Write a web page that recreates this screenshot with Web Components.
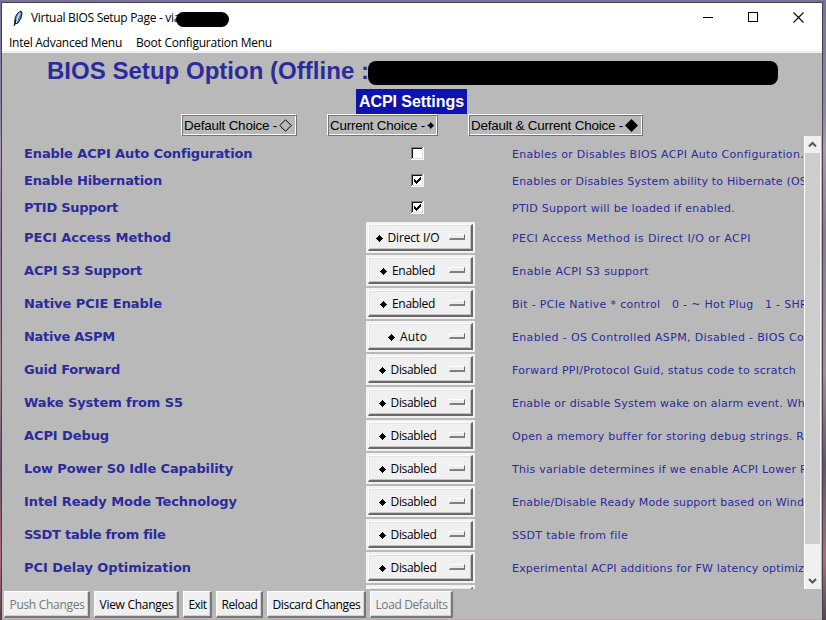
<!DOCTYPE html>
<html lang="en"><head><meta charset="utf-8"><title>Virtual BIOS Setup Page</title>
<style>html,body{margin:0;height:620px;overflow:hidden}</style></head>
<body><bios-window></bios-window>
<script>
const ui='"Open Sans","Noto Sans",sans-serif';
function define(name,html,init){
  customElements.define(name,class extends HTMLElement{
    connectedCallback(){
      if(this.shadowRoot)return;
      this.attachShadow({mode:'open'});
      const t=document.createElement('template');
      t.innerHTML=typeof html==='function'?html(this):html;
      this.shadowRoot.append(t.content.cloneNode(true));
      if(init)init(this);
    }
  });
}
/* Single text line tracked to an exact width in pixels. */
define('fit-text','<style>:host{display:inline-block;white-space:pre;flex:none}</style><span><slot></slot></span>',el=>{
  const w=+el.getAttribute('w');if(!w)return;
  const s=el.shadowRoot.querySelector('span'),n=s.getBoundingClientRect().width;
  s.style.letterSpacing=((w-n)/el.textContent.length)+'px';
  el.style.width=w+'px';
});
define('check-box',el=>`<style>:host{display:block;width:13px;height:13px}svg{display:block}</style>
<svg width="13" height="13" shape-rendering="crispEdges"><path fill="#fff" d="M0 0h13v13H0z"/><path fill="#808080" d="M0 0h12v1H1v11H0z"/><path fill="#111" d="M1 1h10v1H2v9H1z"/><path fill="#ddd" d="M11 2h1v10H2v-1h9z"/>
${el.hasAttribute('on')?'<path fill="#000" d="M3 5h1v1h1v1h1V6h1V5h1V4h1V3h1v3H9v1H8v1H7v1H6v1H5V9H4V8H3z"/>':''}</svg>`);
define('option-menu',el=>`<style>
:host{display:block;width:109px;height:31px;box-sizing:border-box;padding:2px;background:#f2f2f2;font:12px/14px ${ui};color:#000}
.b{height:27px;width:105px;box-sizing:border-box;display:flex;align-items:center;background:#f0f0f0;border:1px solid #fff;border-right:2px solid #696969;border-bottom:2px solid #696969;box-shadow:inset 1px 1px #e3e3e3,inset -1px -1px #c4c4c4;padding:1px 6px 0 0}
.t{flex:1;display:flex;justify-content:center;align-items:center;gap:5px;padding-right:3px}
svg{flex:none;margin-top:1px}i{width:16px;height:6px;margin-top:-2px;box-sizing:border-box;border:1px solid #fff;border-right:1px solid #696969;border-bottom:2px solid #808080;background:#ececec}</style>
<div class="b"><div class="t">${el.getAttribute('value')?`<svg width="7" height="7" shape-rendering="crispEdges"><path d="M3 0h1v1h1v1h1v1h1v1H6v1H5v1H4v1H3V6H2V5H1V4H0V3h1V2h1V1h1z"/></svg><fit-text w="${el.getAttribute('w')}">${el.getAttribute('value')}</fit-text>`:''}</div><i></i></div>`);
define('setting-row',el=>{const v=el.getAttribute('value'),c=v==='on'||v==='off';return `<style>
:host{display:grid;grid-template-columns:342px 146px 292px;align-items:center;height:${c?27:33}px;padding-left:22px;color:#2b2b9c}
.l{font:bold 13px/16px "DejaVu Sans",sans-serif}.d{font:11px/14px "DejaVu Sans",sans-serif;overflow:hidden;padding-top:2px}check-box{margin-left:45px}</style>
<fit-text class="l" w="${el.getAttribute('lw')}">${el.getAttribute('label')}</fit-text>
<div>${c?`<check-box ${v==='on'?'on':''}></check-box>`:`<option-menu value="${v}" w="${{'Direct I/O':52,Enabled:43,Auto:27,Disabled:46}[v]||0}"></option-menu>`}</div>
<div class="d"><fit-text w="${el.getAttribute('dw')}">${el.getAttribute('text')}</fit-text></div>`});
define('legend-box',`<style>:host{display:flex;box-sizing:border-box;height:22px;align-items:center;gap:2px;padding:1px 2px 0 2px;border:1px solid #fff;border-right-color:#747474;border-bottom-color:#747474;box-shadow:inset 1px 1px #777,inset -1px -1px #fff;font:13.4px/16px "Liberation Sans",sans-serif;color:#000}</style><slot></slot>`);
define('push-button',el=>`<style>:host{display:flex;justify-content:center;align-items:center;box-sizing:border-box;height:27px;padding:2px 0 0 1px;width:${el.getAttribute('bw')}px;background:#f0f0f0;border:1px solid #fff;border-right:2px solid #777;border-bottom:2px solid #777;box-shadow:inset -1px -1px #d0d0d0;color:#000;font:12px/16px ${ui}}:host([disabled]){color:#777}</style><fit-text w="${el.getAttribute('w')}">${el.textContent}</fit-text>`);
define('scroll-bar',`<style>:host{display:flex;flex-direction:column;width:17px;height:453px;box-sizing:border-box;background:#f0f0f0;border-left:1px solid #fff}
svg{display:block;flex:none}.thumb{height:391px;margin-right:1px;background:#cdcdcd}.gap{flex:1}</style>
<svg width="16" height="17"><path d="M4 10.5 7.5 7 11 10.5" fill="none" stroke="#555" stroke-width="2"/></svg><div class="thumb"></div><div class="gap"></div><svg width="16" height="17"><path d="M4 7 7.5 10.5 11 7" fill="none" stroke="#555" stroke-width="2"/></svg>`);
define('title-bar',`<style>:host{display:flex;height:30px;align-items:center;background:#fff;font:12px/16px ${ui};color:#000;padding-left:10px;position:relative}
.feather{margin-right:7px}.r{position:absolute;left:174px;top:9px;width:53px;height:15px;border-radius:8px;background:#000}.c{margin-left:auto;margin-right:18px;margin-top:-1px;display:flex;gap:35px}svg{flex:none}</style>
<svg class="feather" width="12" height="17" viewBox="0 0 12 17"><path d="M3 14C2 9 4 3 9 1l1 2-1 5-3 5z" fill="#4b85bd" stroke="#111"/><path d="M8 3C6 6 5 9 4 13" stroke="#b8def4" stroke-width="1.5" fill="none"/><path d="m2 16 2-6" stroke="#000"/></svg>
<fit-text w="149">Virtual BIOS Setup Page - via</fit-text><span class="r"></span>
<div class="c"><svg width="10" height="10" shape-rendering="crispEdges"><path d="M0 5h10v1H0z"/></svg><svg width="10" height="10" shape-rendering="crispEdges"><path d="M.5.5h9v9h-9z" fill="none" stroke="#000"/></svg><svg width="11" height="11"><path d="m.5.5 10 10m0-10-10 10" stroke="#000" stroke-width="1.1"/></svg></div>`);
define('menu-bar',`<style>:host{display:flex;gap:14px;height:16px;padding:2px 0 0 7px;align-items:center;background:#fff;border-bottom:2px solid #f0f0f0;font:12px/16px ${ui};color:#000}</style><fit-text w="113">Intel Advanced Menu</fit-text><fit-text w="136">Boot Configuration Menu</fit-text>`);
const rows=[
['Enable ACPI Auto Configuration',228,'off','Enables or Disables BIOS ACPI Auto Configuration.',292],
['Enable Hibernation',138,'on','Enables or Disables System ability to Hibernate (OS',295],
['PTID Support',94,'on','PTID Support will be loaded if enabled.',223],
['PECI Access Method',147,'Direct I/O','PECI Access Method is Direct I/O or ACPI',239],
['ACPI S3 Support',118,'Enabled','Enable ACPI S3 support',137],
['Native PCIE Enable',138,'Enabled','Bit - PCIe Native * control   0 - ~ Hot Plug   1 - SHP',295],
['Native ASPM',91,'Auto','Enabled - OS Controlled ASPM, Disabled - BIOS Co',292],
['Guid Forward',96,'Disabled','Forward PPI/Protocol Guid, status code to scratch',284],
['Wake System from S5',159,'Disabled','Enable or disable System wake on alarm event. Wh',293],
['ACPI Debug',85,'Disabled','Open a memory buffer for storing debug strings. R',292],
['Low Power S0 Idle Capability',209,'Disabled','This variable determines if we enable ACPI Lower P',295],
['Intel Ready Mode Technology',213,'Disabled','Enable/Disable Ready Mode support based on Windo',299],
['SSDT table from file',141,'Disabled','SSDT table from file',116],
['PCI Delay Optimization',167,'Disabled','Experimental ACPI additions for FW latency optimiz',292],
['',0,'','',0]];
define('bios-window',`<style>
:host{display:block;box-sizing:border-box;width:826px;height:620px;padding:2px 3px 0 1px;background:linear-gradient(180deg,#77729c 0,#8c86a8 18%,#aa98ae 24%,#8a7896 38%,#a98a98 60%,#65526a 75%,#a87079 90%,#5b4254 100%)}
.w{height:618px;box-sizing:border-box;border:1px solid #45414d;border-bottom:0;background:#b9b9b9;display:flex;flex-direction:column}
title-bar,menu-bar,.body,.tools{flex:none}
.head{height:36px;position:relative;padding-left:45px;font:bold 24px/36px "Liberation Sans",sans-serif;color:#2b2b9c}
.redact{position:absolute;left:366px;top:8px;width:410px;height:24px;border-radius:8px;background:#000}
.cap{margin-left:354px;width:111px;height:25px;background:#0e12ae;color:#fff;font:bold 16px/25px "Liberation Sans",sans-serif;text-align:center}
.mid{display:grid;grid-template-columns:802px 17px;height:475px}
.legend{display:flex;height:22px;padding-left:179px}.legend>*{flex:none}
.list{height:449px;overflow:hidden;margin-top:4px}
scroll-bar{margin-top:22px}
.tools{display:flex;gap:4px;padding:2px 0 0 2px;height:27px}.end{margin-top:auto;height:1px;background:#b8aaae}
</style><div class="w"><title-bar></title-bar><menu-bar></menu-bar>
<div class="head"><fit-text w="322">BIOS Setup Option (Offline :</fit-text><span class="redact"></span></div>
<div class="cap"><fit-text w="105">ACPI Settings</fit-text></div>
<div class="mid"><div><div class="legend">
<legend-box style="width:116px"><fit-text w="93">Default Choice -</fit-text><svg width="13" height="13"><path d="M6.5.8 12.2 6.5 6.5 12.2.8 6.5z" fill="none" stroke="#000"/></svg></legend-box>
<legend-box style="width:111px;margin-left:30px"><fit-text w="95">Current Choice -</fit-text><svg width="7" height="7"><path d="M3.5 0 7 3.5 3.5 7 2.5 5 0 3.5 2.5 2z"/></svg></legend-box>
<legend-box style="width:175px;margin-left:30px"><fit-text w="152">Default &amp; Current Choice -</fit-text><svg width="13" height="13"><path d="M6.5 0 13 6.5 6.5 13 0 6.5z"/></svg></legend-box>
</div><div class="list">${rows.map(r=>`<setting-row label="${r[0]}" lw="${r[1]}" value="${r[2]}" text="${r[3]}" dw="${r[4]}"></setting-row>`).join('')}</div></div><scroll-bar></scroll-bar></div>
<div class="tools"><push-button bw="86" w="75">Push Changes</push-button><push-button bw="85" w="74">View Changes</push-button><push-button bw="29" w="18">Exit</push-button><push-button bw="47" w="36">Reload</push-button><push-button bw="99" w="88">Discard Changes</push-button><push-button bw="83" w="72">Load Defaults</push-button></div><div class="end"></div></div>`,el=>{
 const b=el.shadowRoot.querySelectorAll('push-button');b[0].setAttribute('disabled','');b[5].setAttribute('disabled','');
});
</script></body></html>
